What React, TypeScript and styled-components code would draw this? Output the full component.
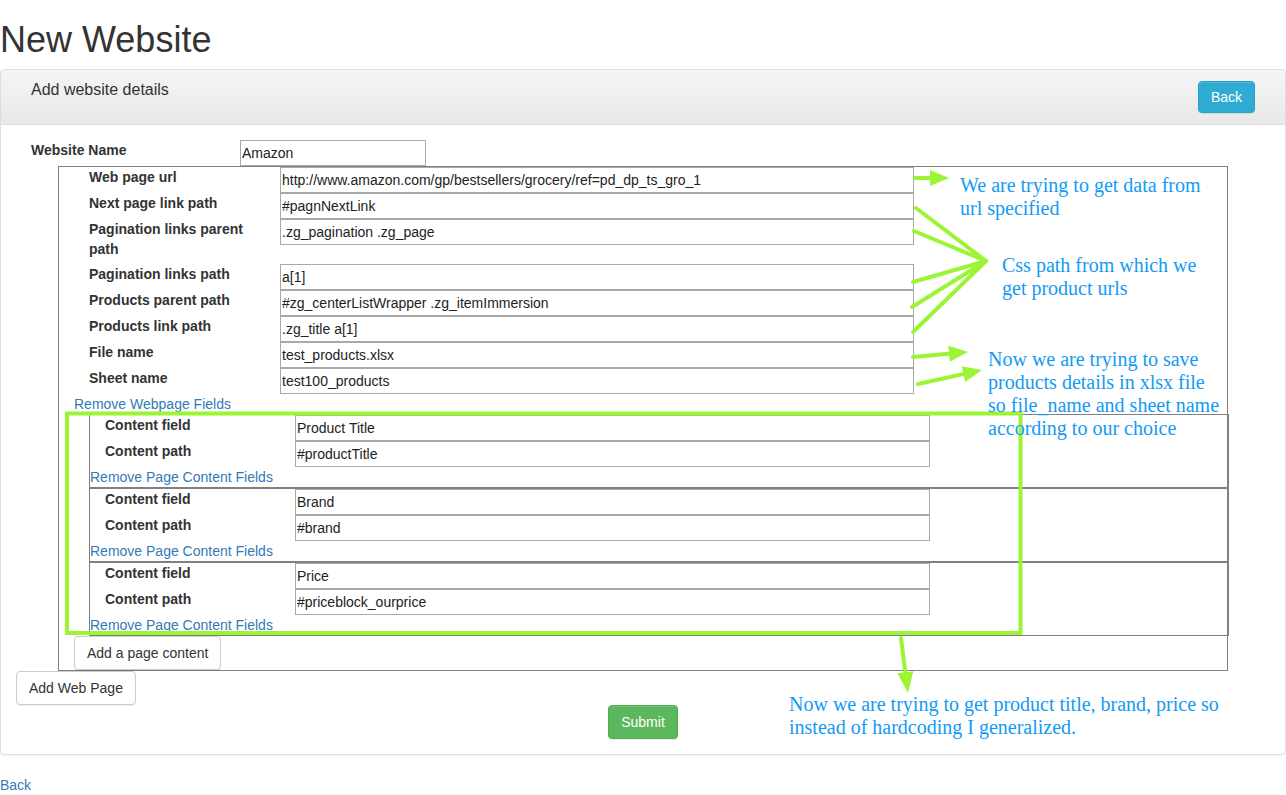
import React from "react";
import styled, { createGlobalStyle } from "styled-components";

const GlobalStyle = createGlobalStyle`
  html, body {
    margin: 0;
    padding: 0;
    overflow: hidden;
    background: #fff;
  }
  body {
    font-family: "Liberation Sans", Arial, Helvetica, sans-serif;
    font-size: 14px;
    line-height: 20px;
    color: #333;
  }
  * { box-sizing: border-box; }
`;

const Page = styled.div`
  position: relative;
  display: flow-root;
  width: 1286px;
  height: 795px;
`;

const Title = styled.h1`
  margin: 20px 0 10px;
  font-size: 36px;
  font-weight: 500;
  line-height: 39px;
  color: #333;
`;

const Panel = styled.div`
  border: 1px solid #ddd;
  border-radius: 4px;
  margin-bottom: 20px;
  box-shadow: 0 1px 2px rgba(0, 0, 0, 0.05);
`;

const PanelHeading = styled.div`
  display: flex;
  justify-content: space-between;
  align-items: flex-start;
  padding: 11px 30px 11px 30px;
  background: linear-gradient(to bottom, #f5f5f5 0%, #e8e8e8 100%);
  border-bottom: 1px solid #ddd;
  border-radius: 3px 3px 0 0;
`;

const PanelTitle = styled.div`
  font-size: 16px;
  line-height: 18px;
  color: #333;
`;

const PanelBody = styled.div`
  padding: 15px;
`;

const Btn = styled.button<{ $variant?: "default" | "info" | "success"; $small?: boolean }>`
  display: inline-block;
  font-family: "Liberation Sans", Arial, sans-serif;
  font-size: 14px;
  line-height: 20px;
  padding: ${(p) => (p.$small ? "5px 12px" : "6px 12px")};
  border-radius: 4px;
  border: 1px solid
    ${(p) => (p.$variant === "info" ? "#28a1c9" : p.$variant === "success" ? "#4cae4c" : "#ccc")};
  background: ${(p) => (p.$variant === "info" ? "#30abd3" : p.$variant === "success" ? "#5cb85c" : "#fff")};
  color: ${(p) => (p.$variant && p.$variant !== "default" ? "#fff" : "#333")};
  box-shadow: inset 0 1px 0 rgba(255, 255, 255, 0.15), 0 1px 1px rgba(0, 0, 0, 0.075);
  cursor: pointer;
`;

const NameRow = styled.div`
  display: flex;
  align-items: flex-start;
  padding-left: 15px;
`;

const NameLabel = styled.label`
  width: 209px;
  font-weight: bold;
  flex-shrink: 0;
`;

const TextInput = styled.input<{ $w: number }>`
  width: ${(p) => p.$w}px;
  height: 26px;
  border: 1px solid #a9a9a9;
  padding: 1px 1px;
  margin: 0;
  font-family: "Liberation Sans", Arial, sans-serif;
  font-size: 14px;
  color: #222;
  background: #fff;
  flex-shrink: 0;
`;

const WebPageBox = styled.div`
  margin-left: 42px;
  width: 1170px;
  border: 1px solid #808080;
  padding-left: 15px;
`;

const FieldRow = styled.div`
  display: flex;
  align-items: flex-start;
  padding-left: 15px;
`;

const FieldLabel = styled.label<{ $w: number }>`
  width: ${(p) => p.$w}px;
  flex-shrink: 0;
  padding-right: 20px;
  margin-bottom: 5px;
  font-weight: bold;
  line-height: 20px;
`;

const LinkA = styled.a`
  display: block;
  color: #337ab7;
  text-decoration: none;
  line-height: 20px;
  width: max-content;
`;

const ContentBox = styled.div`
  margin-left: 15px;
  width: 1140px;
  border: 1px solid #808080;
`;

const AddContentWrap = styled.div`
  display: flex;
`;

const SubmitRow = styled.div`
  display: flex;
  justify-content: center;
`;

const BackLink = styled.a`
  display: block;
  color: #337ab7;
  text-decoration: none;
  line-height: 20px;
  width: max-content;
`;

const Overlay = styled.svg`
  position: absolute;
  left: 0;
  top: 0;
  pointer-events: none;
`;

const Note = styled.div<{ $x: number; $y: number }>`
  position: absolute;
  left: ${(p) => p.$x}px;
  top: ${(p) => p.$y}px;
  font-family: "Liberation Serif", "Times New Roman", serif;
  font-size: 20px;
  line-height: 23px;
  color: #139af4;
  white-space: nowrap;
  pointer-events: none;
`;

const webFields: [string, string][] = [
  ["Web page url", "http://www.amazon.com/gp/bestsellers/grocery/ref=pd_dp_ts_gro_1"],
  ["Next page link path", "#pagnNextLink"],
  ["Pagination links parent path", ".zg_pagination .zg_page"],
  ["Pagination links path", "a[1]"],
  ["Products parent path", "#zg_centerListWrapper .zg_itemImmersion"],
  ["Products link path", ".zg_title a[1]"],
  ["File name", "test_products.xlsx"],
  ["Sheet name", "test100_products"],
];

const contents: [string, string][] = [
  ["Product Title", "#productTitle"],
  ["Brand", "#brand"],
  ["Price", "#priceblock_ourprice"],
];

const G = "#9bf534";

function ArrowHead({ tip, from, len = 19, half = 8 }: { tip: [number, number]; from: [number, number]; len?: number; half?: number }) {
  const dx = tip[0] - from[0];
  const dy = tip[1] - from[1];
  const l = Math.hypot(dx, dy);
  const ux = dx / l;
  const uy = dy / l;
  const bx = tip[0] - len * ux;
  const by = tip[1] - len * uy;
  const nx = -uy;
  const ny = ux;
  const pts = `${tip[0]},${tip[1]} ${bx + half * nx},${by + half * ny} ${bx - half * nx},${by - half * ny}`;
  return (
    <>
      <line x1={from[0]} y1={from[1]} x2={bx + ux * 2} y2={by + uy * 2} stroke={G} strokeWidth={4} strokeLinecap="round" />
      <polygon points={pts} fill={G} />
    </>
  );
}

export default function App() {
  const fan: [number, number][] = [
    [916, 208],
    [914, 231],
    [913, 282],
    [912, 307],
    [913, 332],
  ];
  return (
    <Page>
      <GlobalStyle />
      <Title>New Website</Title>
      <Panel>
        <PanelHeading>
          <PanelTitle>Add website details</PanelTitle>
          <Btn $variant="info" $small>
            Back
          </Btn>
        </PanelHeading>
        <PanelBody>
          <NameRow>
            <NameLabel>Website Name</NameLabel>
            <TextInput $w={186} defaultValue="Amazon" />
          </NameRow>
          <WebPageBox>
            {webFields.map(([label, value]) => (
              <FieldRow key={label}>
                <FieldLabel $w={191}>{label}</FieldLabel>
                <TextInput $w={634} defaultValue={value} />
              </FieldRow>
            ))}
            <LinkA href="#">Remove Webpage Fields</LinkA>
            {contents.map(([field, path]) => (
              <ContentBox key={field}>
                <FieldRow>
                  <FieldLabel $w={190}>Content field</FieldLabel>
                  <TextInput $w={635} defaultValue={field} />
                </FieldRow>
                <FieldRow>
                  <FieldLabel $w={190}>Content path</FieldLabel>
                  <TextInput $w={635} defaultValue={path} />
                </FieldRow>
                <LinkA href="#">Remove Page Content Fields</LinkA>
              </ContentBox>
            ))}
            <AddContentWrap>
              <Btn>Add a page content</Btn>
            </AddContentWrap>
          </WebPageBox>
          <div>
            <Btn>Add Web Page</Btn>
          </div>
          <SubmitRow>
            <Btn $variant="success">Submit</Btn>
          </SubmitRow>
        </PanelBody>
      </Panel>
      <BackLink href="#">Back</BackLink>

      <Overlay width={1286} height={795} viewBox="0 0 1286 795">
        <rect x={67} y={413.5} width={953.5} height={219.5} fill="none" stroke={G} strokeWidth={4} />
        <ArrowHead from={[915, 178]} tip={[949, 178]} />
        {fan.map(([x, y]) => (
          <line key={y} x1={986} y1={261} x2={x} y2={y} stroke={G} strokeWidth={4} strokeLinecap="round" />
        ))}
        <ArrowHead from={[913, 357]} tip={[968, 352]} />
        <ArrowHead from={[918, 384]} tip={[982, 370]} />
        <ArrowHead from={[901, 638]} tip={[908, 693]} len={21} />
      </Overlay>
      <Note $x={960} $y={174}>
        We are trying to get data from
        <br />
        url specified
      </Note>
      <Note $x={1002} $y={254}>
        Css path from which we
        <br />
        get product urls
      </Note>
      <Note $x={988} $y={348}>
        Now we are trying to save
        <br />
        products details in xlsx file
        <br />
        so file_name and sheet name
        <br />
        according to our choice
      </Note>
      <Note $x={789} $y={693}>
        Now we are trying to get product title, brand, price so
        <br />
        instead of hardcoding I generalized.
      </Note>
    </Page>
  );
}
